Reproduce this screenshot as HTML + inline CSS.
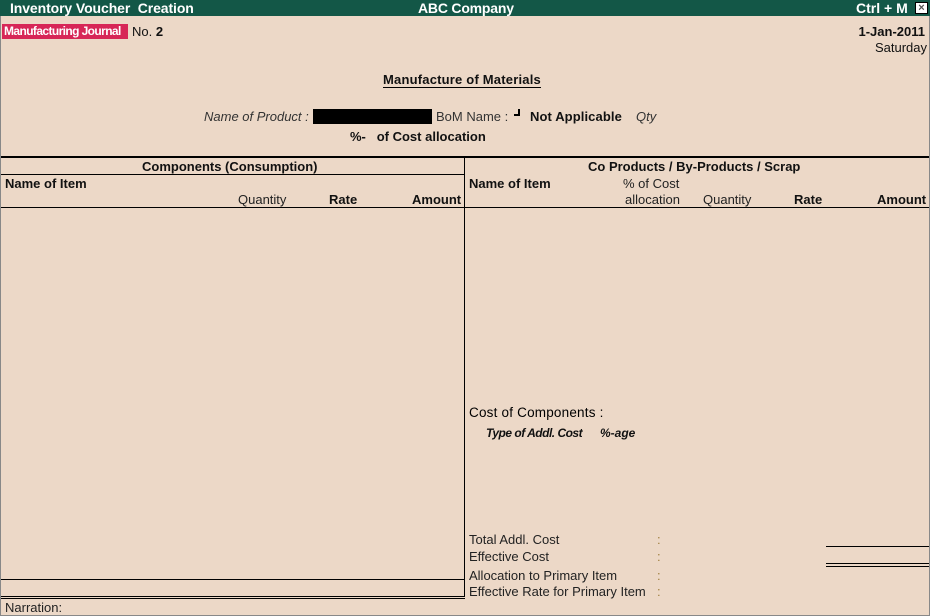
<!DOCTYPE html>
<html><head><meta charset="utf-8"><style>
*{margin:0;padding:0;box-sizing:border-box}
body{width:930px;height:616px;background:#ecd8c7;font-family:"Liberation Sans",Arial,sans-serif;font-size:13px;color:#111;position:relative;overflow:hidden}
.a{position:absolute;white-space:nowrap}
.b{font-weight:bold}
.i{font-style:italic}
.h{position:absolute;background:#000}
</style></head><body>
<div class="a" style="left:0;top:0;width:930px;height:16px;background:#135747"></div>
<div class="a b" style="left:10px;top:0px;color:#fff;font-size:14px;letter-spacing:-0.1px">Inventory Voucher&nbsp; Creation</div>
<div class="a b" style="left:418px;top:0px;color:#fff;font-size:14px;letter-spacing:-0.2px">ABC Company</div>
<div class="a b" style="left:856px;top:0px;color:#fff;font-size:14px">Ctrl + M</div>
<div class="a" style="left:915px;top:2px;width:13px;height:12px;background:#fff;border:1px solid #000;font-size:11px;line-height:10px;text-align:center;color:#555;font-weight:bold">×</div>
<div class="a" style="left:0;top:16px;width:1px;height:600px;background:#888"></div>
<div class="a" style="left:929px;top:16px;width:1px;height:600px;background:#888"></div>
<div class="a" style="left:0;top:615px;width:930px;height:1px;background:#888"></div>
<div class="a b" style="left:2px;top:24px;height:15px;width:126px;background:#d72657;color:#fff;font-size:12px;padding-left:2px;line-height:15px;letter-spacing:-0.6px">Manufacturing Journal</div>
<div class="a" style="left:132px;top:24px">No. <b>2</b></div>
<div class="a b" style="right:5px;top:24px">1-Jan-2011</div>
<div class="a" style="right:3px;top:40px">Saturday</div>
<div class="a b" style="left:383px;top:72px;border-bottom:1px solid #000;line-height:15px;letter-spacing:0.2px">Manufacture of Materials</div>
<div class="a i" style="left:204px;top:109px;color:#333">Name of Product :</div>
<div class="a" style="left:313px;top:109px;width:119px;height:15px;background:#000"></div>
<div class="a" style="left:436px;top:109px;color:#333">BoM Name :</div>
<div class="a" style="left:514px;top:109px;width:6px;height:7px;border-right:2px solid #000;border-bottom:2px solid #000"></div>
<div class="a b" style="left:530px;top:109px;letter-spacing:0.1px">Not Applicable</div>
<div class="a i" style="left:636px;top:109px;color:#333">Qty</div>
<div class="a b" style="left:350px;top:129px">%-&nbsp;&nbsp; of Cost allocation</div>
<div class="h" style="left:1px;top:156px;width:928px;height:2px"></div>
<div class="h" style="left:464px;top:158px;width:1px;height:439px"></div>
<div class="a b" style="left:142px;top:159px">Components (Consumption)</div>
<div class="a b" style="left:588px;top:159px">Co Products / By-Products / Scrap</div>
<div class="h" style="left:1px;top:174px;width:463px;height:1px"></div>
<div class="a b" style="left:5px;top:176px">Name of Item</div>
<div class="a" style="left:238px;top:192px;color:#222">Quantity</div>
<div class="a b" style="left:329px;top:192px">Rate</div>
<div class="a b" style="left:412px;top:192px">Amount</div>
<div class="a b" style="left:469px;top:176px">Name of Item</div>
<div class="a" style="left:623px;top:176px;color:#222">% of Cost</div>
<div class="a" style="left:625px;top:192px;color:#222">allocation</div>
<div class="a" style="left:703px;top:192px;color:#222">Quantity</div>
<div class="a b" style="left:794px;top:192px">Rate</div>
<div class="a b" style="left:877px;top:192px">Amount</div>
<div class="h" style="left:1px;top:207px;width:928px;height:1px"></div>
<div class="a" style="left:469px;top:405px;font-size:13.5px;letter-spacing:0.2px;color:#000">Cost of Components :</div>
<div class="a b i" style="left:486px;top:426px;font-size:12px;letter-spacing:-0.5px">Type of Addl. Cost</div>
<div class="a b i" style="left:600px;top:426px;font-size:12px">%-age</div>
<div class="a" style="left:469px;top:532px;color:#222">Total Addl. Cost</div>
<div class="a" style="left:469px;top:549px;color:#222">Effective Cost</div>
<div class="a" style="left:469px;top:568px;color:#222">Allocation to Primary Item</div>
<div class="a" style="left:469px;top:584px;color:#222">Effective Rate for Primary Item</div>
<div class="a" style="left:657px;top:532px;color:#a08040">:</div>
<div class="a" style="left:657px;top:549px;color:#a08040">:</div>
<div class="a" style="left:657px;top:568px;color:#a08040">:</div>
<div class="a" style="left:657px;top:584px;color:#a08040">:</div>
<div class="h" style="left:826px;top:546px;width:103px;height:1px"></div>
<div class="h" style="left:826px;top:563px;width:103px;height:1px"></div>
<div class="h" style="left:826px;top:566px;width:103px;height:1px"></div>
<div class="h" style="left:1px;top:579px;width:463px;height:1px"></div>
<div class="h" style="left:1px;top:596px;width:464px;height:1px"></div>
<div class="h" style="left:1px;top:598px;width:464px;height:1px"></div>
<div class="a" style="left:5px;top:600px;color:#222">Narration:</div>
</body></html>
